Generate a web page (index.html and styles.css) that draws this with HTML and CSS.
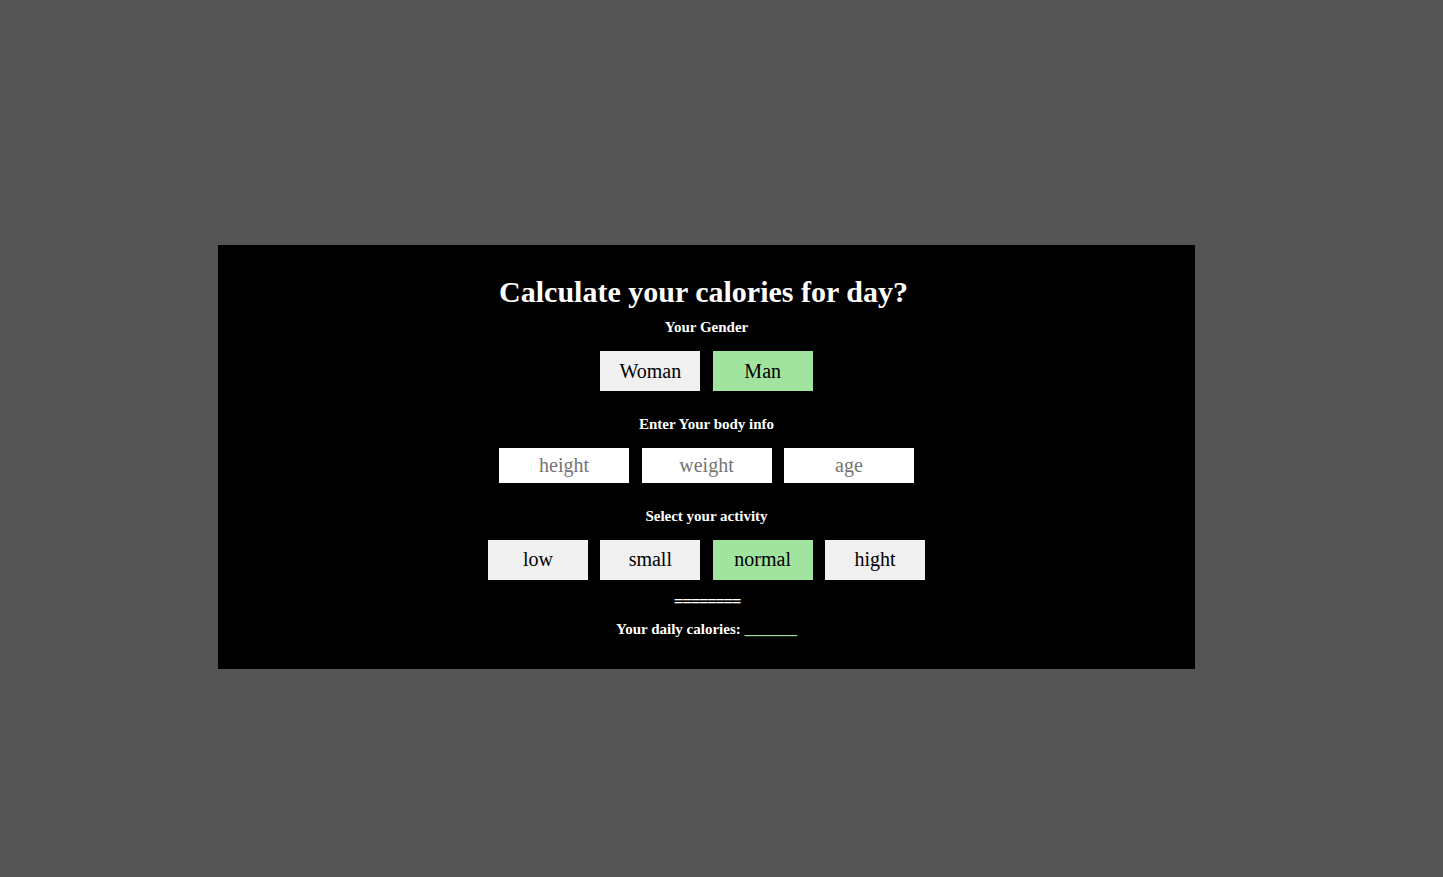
FILE: index.html
```html
<!DOCTYPE html>
<html lang="en">
<head>
<meta charset="utf-8">
<title>Calories calculator</title>
<link rel="stylesheet" href="styles.css">
</head>
<body>
<main class="panel">
  <h1 class="title">Calculate your calories for day?</h1>
  <h4 class="label">Your Gender</h4>
  <div class="row">
    <button class="choice">Woman</button>
    <button class="choice active">Man</button>
  </div>
  <h4 class="label label-gap">Enter Your body info</h4>
  <div class="row row-inputs">
    <input class="field" type="text" placeholder="height">
    <input class="field" type="text" placeholder="weight">
    <input class="field" type="text" placeholder="age">
  </div>
  <h4 class="label label-gap">Select your activity</h4>
  <div class="row">
    <button class="choice">low</button>
    <button class="choice">small</button>
    <button class="choice active">normal</button>
    <button class="choice">hight</button>
  </div>
  <div class="sep">========</div>
  <div class="result">Your daily calories: <span class="value">_______</span></div>
</main>
</body>
</html>
```
FILE: styles.css
```css
html, body {
  margin: 0;
  padding: 0;
}
body {
  background: #545454;
  min-height: 877px;
  padding: 245px 0 0 218px;
  box-sizing: border-box;
  font-family: "Liberation Serif", "Times New Roman", serif;
}
.panel {
  width: 977px;
  height: 424px;
  background: #000;
  color: #fff;
  display: flex;
  flex-direction: column;
  align-items: center;
  padding: 30px 0 0;
  box-sizing: border-box;
}
.title {
  margin: 0;
  padding-right: 6px;
  font-size: 30px;
  font-weight: bold;
  line-height: 34.5px;
}
.label {
  margin: 9px 0 0;
  font-size: 15px;
  font-weight: bold;
  line-height: 17.25px;
}
.label-gap {
  margin-top: 25px;
}
.row {
  display: flex;
  gap: 12.4px;
  margin-top: 15.5px;
}
.label-gap + .row {
  margin-top: 14.5px;
}
.row-inputs {
  gap: 12.5px;
}
.choice {
  width: 100px;
  height: 40px;
  border: none;
  padding: 0;
  background: #f0f0f0;
  color: #000;
  font-family: "Liberation Serif", "Times New Roman", serif;
  font-size: 20px;
  line-height: 23px;
}
.choice.active {
  background: #a0e4a0;
}
.field {
  width: 130px;
  height: 35px;
  border: none;
  padding: 0;
  background: #fff;
  text-align: center;
  font-family: "Liberation Serif", "Times New Roman", serif;
  font-size: 20px;
  outline: none;
}
.field::placeholder {
  color: #757575;
}
.sep {
  margin-top: 13px;
  padding-left: 1px;
  font-size: 17px;
  font-weight: bold;
  letter-spacing: -1.4px;
  line-height: 17.25px;
}
.result {
  margin-top: 11px;
  font-size: 15px;
  font-weight: bold;
  line-height: 17.25px;
}
.value {
  color: #a0e4a0;
  font-weight: bold;
}
```
